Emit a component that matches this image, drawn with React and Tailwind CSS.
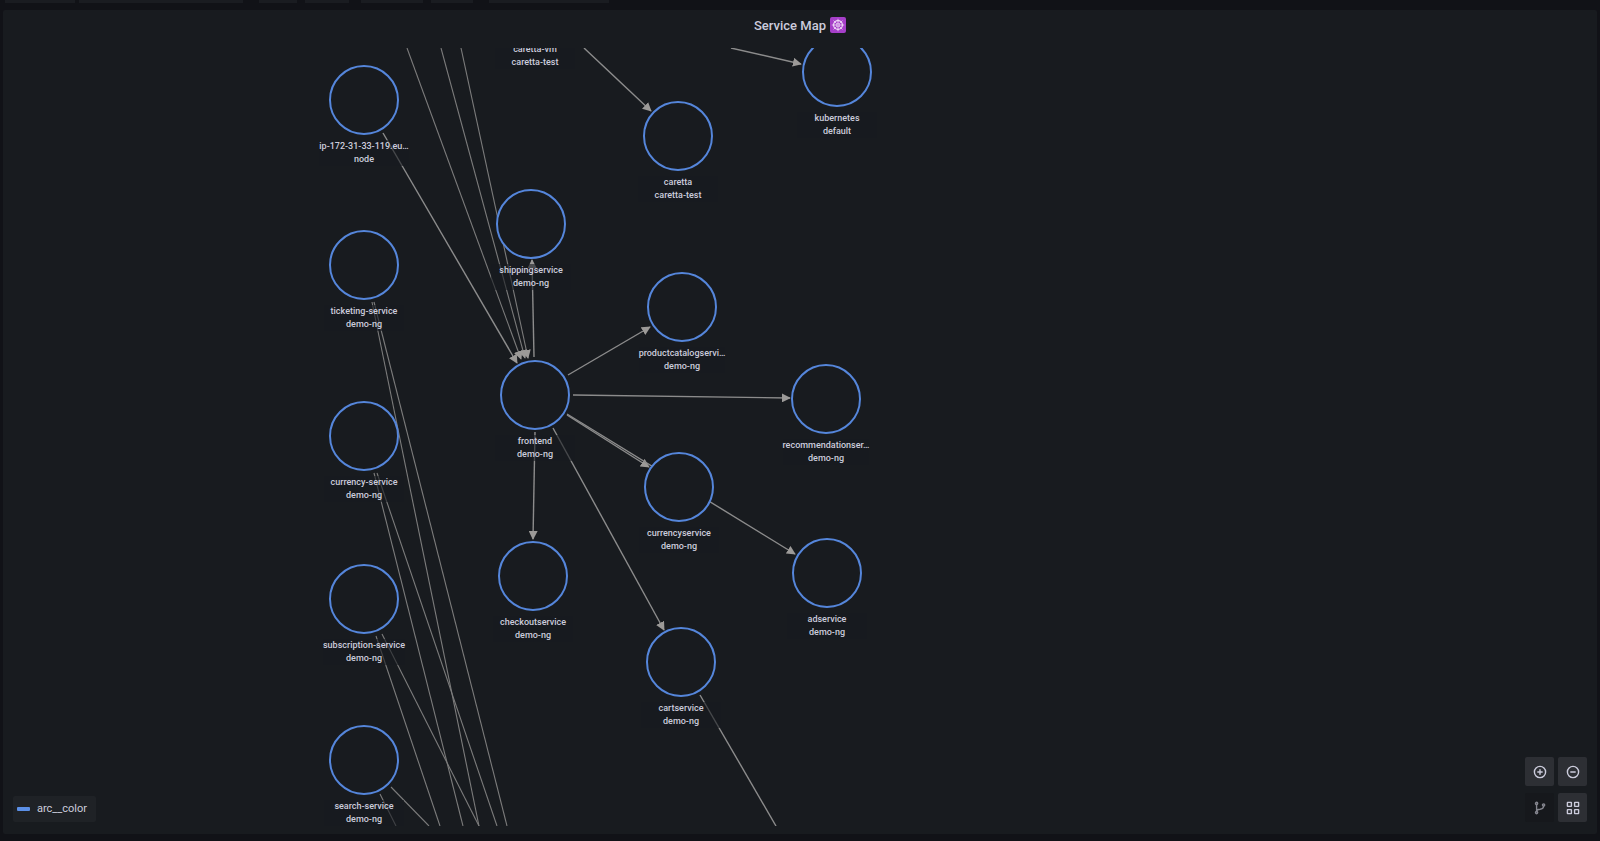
import React from "react";

const nodes = [
  { id: "caretta-vm", x: 532, y: -45, title: "caretta-vm", sub: "caretta-test" },
  { id: "kubernetes", x: 834, y: 24, title: "kubernetes", sub: "default" },
  { id: "ip", x: 361, y: 52, title: "ip-172-31-33-119.eu…", sub: "node" },
  { id: "caretta", x: 675, y: 88, title: "caretta", sub: "caretta-test" },
  { id: "shipping", x: 528, y: 176, title: "shippingservice", sub: "demo-ng" },
  { id: "ticketing", x: 361, y: 217, title: "ticketing-service", sub: "demo-ng" },
  { id: "catalog", x: 679, y: 259, title: "productcatalogservi…", sub: "demo-ng" },
  { id: "frontend", x: 532, y: 347, title: "frontend", sub: "demo-ng" },
  { id: "recommend", x: 823, y: 351, title: "recommendationser…", sub: "demo-ng" },
  { id: "currency-svc", x: 361, y: 388, title: "currency-service", sub: "demo-ng" },
  { id: "currency", x: 676, y: 439, title: "currencyservice", sub: "demo-ng" },
  { id: "ad", x: 824, y: 525, title: "adservice", sub: "demo-ng" },
  { id: "checkout", x: 530, y: 528, title: "checkoutservice", sub: "demo-ng" },
  { id: "subscription", x: 361, y: 551, title: "subscription-service", sub: "demo-ng" },
  { id: "cart", x: 678, y: 614, title: "cartservice", sub: "demo-ng" },
  { id: "search", x: 361, y: 712, title: "search-service", sub: "demo-ng" },
];

// [x1, y1, x2, y2], heavy edges get the thicker stroke
const edges = [
  { points: [404, 0, 518, 311], arrow: true },
  { points: [438, 0, 522, 310], arrow: true },
  { points: [458, 0, 525, 310], arrow: true },
  { points: [380, 85, 514, 315], arrow: true, heavy: true },
  { points: [531, 309, 529, 212], arrow: true, heavy: true },
  { points: [565, 327, 647, 279], arrow: true, heavy: true },
  { points: [570, 347, 787, 350], arrow: true, heavy: true },
  { points: [564, 367, 646, 419], arrow: true, heavy: true },
  { points: [564, 366, 792, 506], arrow: true, heavy: true },
  { points: [550, 380, 661, 582], arrow: true, heavy: true },
  { points: [532, 384, 530, 491], arrow: true, heavy: true },
  { points: [581, 0, 648, 63], arrow: true, heavy: true },
  { points: [728, 0, 798, 16], arrow: true, heavy: true },
  { points: [697, 647, 773, 778], heavy: true },
  { points: [369, 254, 476, 778] },
  { points: [371, 254, 504, 778] },
  { points: [371, 425, 460, 778] },
  { points: [374, 425, 494, 778] },
  { points: [373, 588, 437, 778] },
  { points: [379, 586, 476, 778] },
  { points: [377, 746, 393, 778] },
  { points: [388, 739, 426, 778] },
];

function Edge({ points, arrow, heavy }) {
  const [x1, y1, x2, y2] = points;
  return (
    <line
      x1={x1}
      y1={y1}
      x2={x2}
      y2={y2}
      stroke={heavy ? "#8c8c8c" : "#7c7c7c"}
      strokeWidth={heavy ? 1.4 : 1.1}
      markerEnd={arrow ? "url(#arrow)" : undefined}
    />
  );
}

function Node({ x, y, title, sub }) {
  return (
    <div
      className="absolute flex w-24 flex-col items-center"
      style={{ left: x - 48, top: y - 35 }}
    >
      <div className="size-[70px] rounded-full border-2 border-[#5586db] bg-[#181b1f]" />
      <div className="mt-[5px] min-w-20 bg-[#181b1f]/60 text-center text-[9px] leading-[13px] font-medium whitespace-nowrap text-[#ccccdc]">
        <div>{title}</div>
        <div>{sub}</div>
      </div>
    </div>
  );
}

function IconButton({ label, className, children }) {
  return (
    <button
      type="button"
      aria-label={label}
      className={`flex size-[29px] items-center justify-center rounded-xs ${className}`}
    >
      <svg
        width="14"
        height="14"
        viewBox="0 0 14 14"
        fill="none"
        stroke="currentColor"
        strokeWidth="1.4"
        strokeLinecap="round"
      >
        {children}
      </svg>
    </button>
  );
}

// Helm wheel on a purple tile
function HelmEmoji() {
  return (
    <svg width="16" height="16" viewBox="0 0 16 16" aria-hidden="true">
      <rect width="16" height="16" rx="2" fill="#a63fc9" />
      <g stroke="#f0dcf7" fill="none">
        <circle cx="8" cy="8" r="4.4" strokeWidth="1.2" />
        <circle cx="8" cy="8" r="1.3" strokeWidth="1" />
        <path
          d="M8 1.8v4.6M8 9.6v4.6M1.8 8h4.6M9.6 8h4.6M3.6 3.6l3.2 3.2M9.2 9.2l3.2 3.2M12.4 3.6l-3.2 3.2M6.8 9.2l-3.2 3.2"
          strokeWidth="0.8"
        />
      </g>
    </svg>
  );
}

export default function App() {
  return (
    <div className="flex h-screen flex-col overflow-hidden bg-[#111217] px-[3px] pb-[7px] font-['Roboto',sans-serif]">
      {/* Bottom edges of the panels above */}
      <div className="flex h-[10px] shrink-0 items-start pl-[2px]">
        <div className="h-[3px] w-[70px] bg-[#1a1c21]" />
        <div className="ml-[4px] h-[3px] w-[164px] bg-[#1a1c21]" />
        <div className="ml-[16px] h-[3px] w-[38px] bg-[#1a1c21]" />
        <div className="ml-[8px] h-[3px] w-[44px] bg-[#1a1c21]" />
        <div className="ml-[12px] h-[3px] w-[62px] bg-[#1a1c21]" />
        <div className="ml-[8px] h-[3px] w-[42px] bg-[#1a1c21]" />
        <div className="ml-[16px] h-[3px] w-[120px] bg-[#1a1c21]" />
      </div>

      <section className="flex min-h-0 flex-1 flex-col rounded-xs bg-[#181b1f] pb-2">
        <header className="flex h-[38px] shrink-0 items-center justify-center gap-1 pb-2">
          <h2 className="pt-[2px] text-[13px] leading-4 font-medium text-[#ccccdc]">
            Service Map
          </h2>
          <HelmEmoji />
        </header>

        {/* Graph */}
        <div className="relative min-h-0 flex-1 overflow-hidden">
          <svg className="absolute inset-0 size-full">
            <defs>
              <marker
                id="arrow"
                viewBox="0 0 10 10"
                refX="9"
                refY="5"
                markerWidth="9"
                markerHeight="9"
                markerUnits="userSpaceOnUse"
                orient="auto"
              >
                <path d="M0 0L10 5L0 10Z" fill="#9c9a98" />
              </marker>
            </defs>
            {edges.map((edge, i) => (
              <Edge key={i} {...edge} />
            ))}
          </svg>

          {nodes.map((node) => (
            <Node key={node.id} {...node} />
          ))}

          {/* Legend */}
          <button
            type="button"
            className="absolute bottom-1 left-[10px] flex h-[26px] items-center gap-[7px] rounded-xs bg-[#1f2226] pr-[9px] pl-1 text-[11px] text-[#ccccdc]"
          >
            <span className="h-1 w-[13px] rounded-[1px] bg-[#5b8fe6]" />
            arc__color
          </button>

          {/* View controls */}
          <div className="absolute right-[10px] bottom-1 grid grid-cols-2 gap-x-1 gap-y-[7px]">
            <IconButton label="Zoom in" className="bg-[#2d2f34] text-[#ccccdc]">
              <circle cx="7" cy="7" r="5.6" />
              <path d="M7 4.8v4.4M4.8 7h4.4" />
            </IconButton>
            <IconButton label="Zoom out" className="bg-[#2d2f34] text-[#ccccdc]">
              <circle cx="7" cy="7" r="5.6" />
              <path d="M4.8 7h4.4" />
            </IconButton>
            <IconButton
              label="Layered layout"
              className="bg-[#16181c] text-[#85868f]"
            >
              <circle cx="3.6" cy="2.4" r="1.1" />
              <circle cx="3.6" cy="11.6" r="1.1" />
              <circle cx="10.6" cy="4" r="1.1" />
              <path d="M3.6 3.5v7M10.6 5.1c0 2.6-1.6 2.9-3.6 3.1-2 .1-3.4.6-3.4 2" />
            </IconButton>
            <IconButton
              label="Grid layout"
              className="bg-[#2d2f34] text-[#ccccdc]"
            >
              <rect x="1.4" y="1.4" width="4" height="4" rx="0.3" />
              <rect x="8.6" y="1.4" width="4" height="4" rx="0.3" />
              <rect x="1.4" y="8.6" width="4" height="4" rx="0.3" />
              <rect x="8.6" y="8.6" width="4" height="4" rx="0.3" />
            </IconButton>
          </div>
        </div>
      </section>
    </div>
  );
}
